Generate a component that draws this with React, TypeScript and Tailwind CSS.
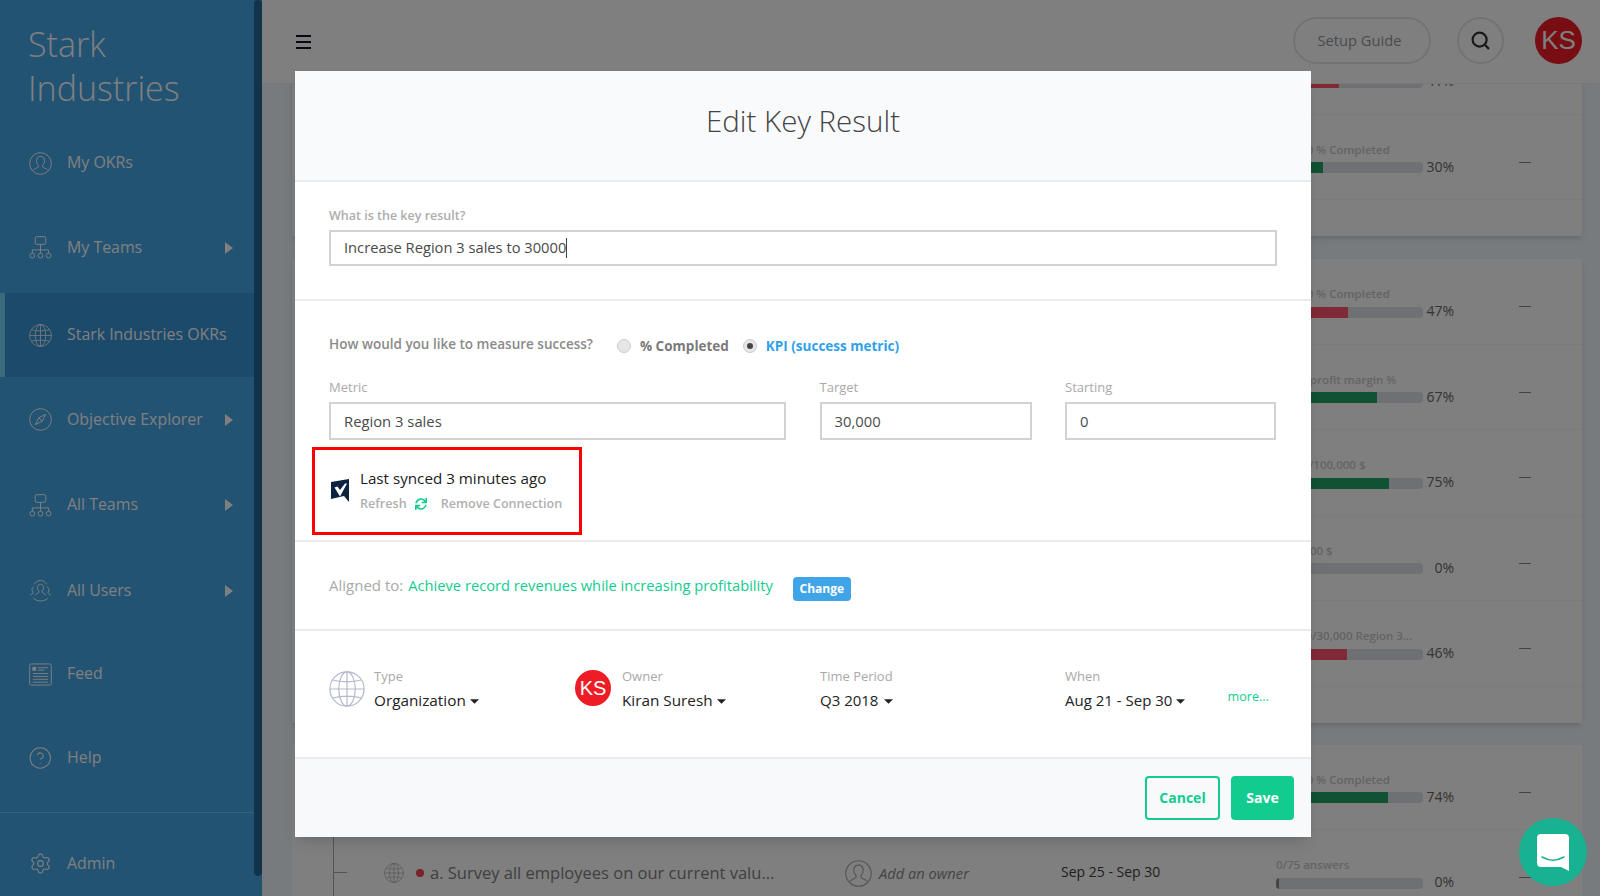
import { CircleHelp, Search, Settings } from 'lucide-react'
import { FaSync } from 'react-icons/fa'

const font = { fontFamily: '"Open Sans", sans-serif' }

function UserIcon({ className }: { className?: string }) {
  return (
    <svg viewBox="0 0 24 24" fill="none" stroke="currentColor" strokeWidth="1" className={className}>
      <circle cx="12" cy="12" r="11.3" />
      <path d="M12 4.5c-2.7 0-4.2 2.1-4.2 4.7 0 2 .9 3.6 2 4.6v1.6c0 1-3.600 1.500-5.300 3.500M12 4.500c2.700 0 4.200 2.100 4.200 4.700 0 2-.9 3.600-2 4.600v1.600c0 1 3.600 1.500 5.300 3.500" />
    </svg>
  )
}

function OrgIcon({ className }: { className?: string }) {
  return (
    <svg viewBox="0 0 24 24" fill="none" stroke="currentColor" strokeWidth="1" className={className}>
      <rect x="6.500" y="0.700" width="11" height="8" rx="1.500" />
      <path d="M12 8.700v9M3.500 18v-3.500h17V18" />
      <circle cx="3.500" cy="20.500" r="2.500" />
      <circle cx="12" cy="20.500" r="2.500" />
      <circle cx="20.500" cy="20.500" r="2.500" />
    </svg>
  )
}

function GlobeIcon({ className }: { className?: string }) {
  return (
    <svg viewBox="0 0 24 24" fill="none" stroke="currentColor" strokeWidth="0.8" className={className}>
      <circle cx="12" cy="12" r="11.400" />
      <ellipse cx="12" cy="12" rx="5.500" ry="11.400" />
      <path d="M12 .6v22.800M.6 12h22.800M2.500 6c5.500 1.600 13.500 1.600 19 0M2.500 18c5.500-1.600 13.500-1.600 19 0" />
    </svg>
  )
}

function CompassIcon({ className }: { className?: string }) {
  return (
    <svg viewBox="0 0 24 24" fill="none" stroke="currentColor" strokeWidth="1" className={className}>
      <circle cx="12" cy="12" r="11.300" />
      <path d="M17.500 6.500 13.800 13.800 6.500 17.500 10.200 10.200Z" />
      <path d="M10.200 10.200 13.800 13.800" />
    </svg>
  )
}

function UsersIcon({ className }: { className?: string }) {
  return (
    <svg viewBox="0 0 24 24" fill="none" stroke="currentColor" strokeWidth="1" className={className}>
      <path d="M12 5.500c-2 0-3.200 1.600-3.200 3.500 0 1.500.7 2.700 1.500 3.500v1.300c0 1-2.800 1.300-3.800 3M12 5.500c2 0 3.200 1.600 3.200 3.500 0 1.500-.7 2.700-1.500 3.500v1.300c0 1 2.800 1.300 3.800 3" />
      <path d="M5.500 8.500c-1.500 0-2.400 1.200-2.400 2.600 0 1.100.5 2 1.100 2.600v1c0 .7-2 1-3 2.300M18.500 8.500c1.500 0 2.400 1.200 2.400 2.600 0 1.100-.5 2-1.100 2.600v1c0 .7 2 1 3 2.300" />
      <path d="M5.500 5.500C7 2.800 9.300 1.500 12 1.500s5 1.300 6.500 4M4.500 20c1.800 1.800 4.500 3 7.500 3s5.700-1.200 7.500-3" />
    </svg>
  )
}

function FeedIcon({ className }: { className?: string }) {
  return (
    <svg viewBox="0 0 24 24" fill="none" stroke="currentColor" strokeWidth="1" className={className}>
      <rect x="0.700" y="1" width="22.600" height="22" rx="1.500" />
      <rect x="4" y="4.500" width="3" height="3" fill="currentColor" />
      <path d="M9 5h11M9 7.500h7M4 11h16M4 14h16M4 17h16M4 20h16" />
    </svg>
  )
}

function Caret() {
  return (
    <svg viewBox="0 0 8 4" className="inline-block h-[5px] w-[9px] fill-[#222] align-middle">
      <path d="M0 0h8L4 4z" />
    </svg>
  )
}

const nav = [
  { label: 'My OKRs', icon: <UserIcon className="h-[23px] w-[23px]" /> },
  { label: 'My Teams', icon: <OrgIcon className="h-[23px] w-[23px]" />, arrow: true, tweak: '-translate-y-[1px]' },
  { label: 'Stark Industries OKRs', icon: <GlobeIcon className="h-[23px] w-[23px]" />, active: true },
  { label: 'Objective Explorer', icon: <CompassIcon className="h-[23px] w-[23px]" />, arrow: true },
  { label: 'All Teams', icon: <OrgIcon className="h-[23px] w-[23px]" />, arrow: true },
  { label: 'All Users', icon: <UsersIcon className="h-[23px] w-[23px]" />, arrow: true },
  { label: 'Feed', icon: <FeedIcon className="h-[23px] w-[23px]" />, tweak: '-mt-[2px]' },
  { label: 'Help', icon: <CircleHelp strokeWidth={1} className="-ml-[1.500px] h-[26px] w-[26px]" />, tweak: '-mt-[2px]' },
]

const card1 = [
  { label: '40/100 % Completed', pct: 41, color: 'bg-[#ff546c]' },
  { label: '30/100 % Completed', pct: 30, color: 'bg-[#22a464]' },
]
const card2 = [
  { label: '47/100 % Completed', pct: 47, color: 'bg-[#ff546c]' },
  { label: '10/15 profit margin %', pct: 67, color: 'bg-[#22a464]' },
  { label: '75000/100,000 $', pct: 75, color: 'bg-[#22a464]' },
  { label: '0/75,000 $', pct: 0, color: 'bg-[#22a464]' },
  { label: '13,800/30,000 Region 3...', pct: 46, color: 'bg-[#ff546c]' },
]

function Progress({ label, pct, color }: { label: string; pct: number; color: string }) {
  return (
    <div className="w-[178px] pt-[27px]">
      <div className="-translate-y-[0.500px] text-[11.500px] leading-4 font-semibold whitespace-nowrap text-[#c8c8c8]">{label}</div>
      <div className="flex h-5 items-center">
        <div className="h-[11px] w-[147px] overflow-hidden rounded-sm bg-[#dfe0e6]">
          <div className={`h-full ${pct === 0 ? 'bg-[#888]' : color}`} style={{ width: `calc(${pct}% + 3px)` }} />
        </div>
        <div className="flex-1 -translate-y-[1px] text-right text-sm text-[#666]">{pct}%</div>
      </div>
    </div>
  )
}

function Row({ item, left, last }: { item: { label: string; pct: number; color: string }; left?: React.ReactNode; last?: boolean }) {
  return (
    <div className={`grid h-[85.5px] grid-cols-[984px_243px_1fr] ${last ? '' : 'border-b border-[#f6f6f6]'}`}>
      <div className="flex">{left}</div>
      <Progress {...item} />
      <div className="pt-[47px]">
        <div className="h-px w-3 bg-[#888]" />
      </div>
    </div>
  )
}

function Field({ label, value, className }: { label: string; value: string; className: string }) {
  return (
    <div className={className}>
      <div className="mb-[7px] text-[13px] leading-4 text-[#a9a9a9]">{label}</div>
      <div className="flex h-[38px] items-center border-2 border-[#d2d2d2] px-[13px] text-[14.800px] text-[#4a4a4a]">{value}</div>
    </div>
  )
}

export default function App() {
  return (
    <div style={font} className="relative flex h-[896px] w-[1600px] overflow-hidden bg-[#eef6fb]">
      {/* Sidebar */}
      <aside className="relative flex h-full w-[262px] shrink-0 flex-col bg-[#44a6e6] text-white">
        <h1 className="h-[122px] pl-[28px] pt-[22px] text-[34px] leading-[44px] font-light">Stark<br />Industries</h1>
        <nav className="flex flex-col gap-[1.500px]">
          {nav.map((item) => (
            <div
              key={item.label}
              className={`flex h-[84px] items-center pl-[29px] pr-[29px] ${item.active ? '!pl-6 border-l-[5px] border-[#74d8f8] bg-[#3694d6]' : 'pb-[2px]'} ${item.tweak ?? ''}`}
            >
              <span className="mr-[15px] flex w-[23px] justify-center">{item.icon}</span>
              <span className="flex-1 text-[15.900px]">{item.label}</span>
              {item.arrow && (
                <svg viewBox="0 0 8 12" className="h-3 w-2 fill-white"><path d="M0 0l8 6-8 6z" /></svg>
              )}
            </div>
          ))}
        </nav>
        <div className="absolute inset-x-0 bottom-0 flex h-[84px] items-center border-t border-[#60d0ee] pl-[29px] pt-[18px]">
          <Settings strokeWidth={1.200} className="mr-[15px] h-[25px] w-[23px]" />
          <span className="text-[15.900px]">Admin</span>
        </div>
        <div className="absolute right-0 top-0 h-[876px] w-2 rounded-md bg-[#246894]" />
      </aside>

      <div className="flex h-full min-w-0 flex-1 flex-col">
        {/* Header */}
        <header className="flex h-[84px] shrink-0 items-center border-b border-[#f0f0f0] bg-white pb-[2px] pl-[34px] pr-[18px]">
          <div className="mt-[2px] flex w-[15px] flex-col gap-1">
            <div className="h-[2px] bg-[#101020]" />
            <div className="h-[2px] bg-[#101020]" />
            <div className="h-[2px] bg-[#101020]" />
          </div>
          <button className="ml-auto h-[47px] w-[138px] rounded-full border-2 border-[#e4e4e4] pr-[5px] text-[14.700px] text-[#979797]">Setup Guide</button>
          <button className="ml-[26px] flex h-[47px] w-[47px] items-center justify-center rounded-full border-2 border-[#e4e4e4]">
            <Search strokeWidth={2.500} className="h-[21px] w-[21px] text-[#333]" />
          </button>
          <div className="ml-[31px] flex h-[47px] w-[47px] items-center justify-center rounded-full bg-[#f11d27] text-[26px] text-white" style={{ fontFamily: '"Liberation Sans", sans-serif' }}>KS</div>
        </header>

        {/* Page behind the modal */}
        <main className="min-h-0 flex-1 overflow-hidden pl-[30px] pr-[18px]">
          <div className="-mt-[55px] flex flex-col">
            <section className="bg-white pb-[36px] shadow-md">
              {card1.map((item) => <Row key={item.label} item={item} />)}
            </section>
            <section className="mt-[23px] bg-white pb-[36px] shadow-md">
              {card2.map((item) => <Row key={item.label} item={item} />)}
            </section>
            <section className="mt-[22px] bg-white">
              <Row item={{ label: '74/100 % Completed', pct: 74, color: 'bg-[#22a464]' }} />
              <Row
                last
                item={{ label: '0/75 answers', pct: 0, color: 'bg-[#888]' }}
                left={
                  <>
                    <div className="ml-[41px] h-full w-[14px] border-l border-[#aaaaaa] pt-[42px]">
                      <div className="h-px bg-[#aaaaaa]" />
                    </div>
                    <div className="ml-[37px] flex w-[461px] items-center self-start pt-[33px]">
                      <GlobeIcon className="h-5 w-5 text-[#aaaaaa]" />
                      <span className="ml-3 h-2 w-2 rounded-full bg-[#f04458]" />
                      <span className="ml-[6px] whitespace-nowrap text-[16.500px] leading-5 text-[#808080]">a. Survey all employees on our current valu...</span>
                    </div>
                    <div className="flex w-[216px] items-center self-start pt-[30px]">
                      <UserIcon className="h-[27px] w-[27px] text-[#aaaaaa]" />
                      <span className="ml-[7px] text-[14.700px] italic text-[#8a8a8a]">Add an owner</span>
                    </div>
                    <div className="self-start pt-[32px] text-sm leading-5 text-[#3e3e3e]">Sep 25 - Sep 30</div>
                  </>
                }
              />
            </section>
          </div>
        </main>
      </div>

      {/* Modal overlay */}
      <div className="absolute inset-0 bg-black/50 pl-[295px] pt-[71px]">
        <div className="flex h-[766px] w-[1016px] flex-col bg-white shadow-lg">
          <div className="flex h-[111px] items-center justify-center border-b-2 border-[#e9ebee] bg-[#f9fafc] pb-[8px]">
            <h2 className="text-[29.500px] font-light text-[#444]">Edit Key Result</h2>
          </div>

          <div className="h-[119px] border-b-2 border-[#e9ebee] px-[34px] pt-[26px]">
            <div className="mb-[6px] text-[12.500px] leading-4 font-semibold text-[#adadad]">What is the key result?</div>
            <div className="flex h-9 items-center border-2 border-[#d2d2d2] px-[13px] pb-[1px] text-[14.700px] text-[#4a4a4a]">
              Increase Region 3 sales to 30000
              <span className="h-5 w-px bg-[#444]" />
            </div>
          </div>

          <div className="h-[241px] border-b-2 border-[#e9ebee] px-[34px] pt-[34px]">
            <div className="flex h-5 items-center text-[13.500px] font-semibold">
              <span className="-translate-y-[1px] text-[#8a8a8a]">How would you like to measure success?</span>
              <span className="ml-[24px] h-[14px] w-[14px] translate-y-[1px] rounded-full border border-[#cccccc] bg-[#e6e6e6]" />
              <span className="ml-[9px] translate-y-[1px] font-bold text-[#7a7a7a]">% Completed</span>
              <span className="ml-[14px] flex h-[14px] w-[14px] translate-y-[1px] items-center justify-center rounded-full border border-[#cccccc] bg-[#e6e6e6]">
                <span className="h-[6px] w-[6px] rounded-full bg-[#444]" />
              </span>
              <span className="ml-[9px] translate-y-[1px] font-bold text-[#2fa1ea]">KPI (success metric)</span>
            </div>
            <div className="mt-6 flex gap-[33.500px]">
              <Field label="Metric" value="Region 3 sales" className="w-[457px]" />
              <Field label="Target" value="30,000" className="w-[212px]" />
              <Field label="Starting" value="0" className="w-[211px]" />
            </div>
            <div className="-ml-[17px] mt-[7px] flex h-[88px] w-[270px] border-[3px] border-[#ff0000] pl-[16px] pt-[18px]">
              <svg viewBox="0 0 19 23" className="mt-[11px] h-[23px] w-[19px] shrink-0">
                <path d="M0 3 18 0v23l-5-6-13 3z" fill="#0d2240" />
                <path d="M3.500 8.500l3-1 2.500 3.500 5-6.500h2L9 17.500z" fill="#fff" />
              </svg>
              <div className="ml-[10px]">
                <div className="text-[15.200px] leading-5 text-[#222]">Last synced 3 minutes ago</div>
                <div className="mt-[6px] flex h-5 items-center text-[12.600px] font-semibold text-[#b0b0b0]">
                  Refresh
                  <FaSync className="ml-[8px] h-3 w-3 text-[#12cc8f]" />
                  <span className="ml-[14px]">Remove Connection</span>
                </div>
              </div>
            </div>
          </div>

          <div className="flex h-[89px] items-center border-b-2 border-[#e9ebee] px-[34px] text-[14.700px]">
            <span className="text-[15px] text-[#a9a9a9]">Aligned to:</span>
            <span className="ml-[5px] text-[#12cc8f]">Achieve record revenues while increasing profitability</span>
            <button className="ml-5 mt-[7px] h-6 w-[58px] rounded-sm bg-[#40a4e8] text-xs font-bold text-white">Change</button>
          </div>

          <div className="grid h-[128px] grid-cols-[246px_245px_245px_1fr] border-b-2 border-[#e9ebee] pl-[34px] pr-[42px] pt-[37px]">
            <div className="flex">
              <GlobeIcon className="mt-[3px] h-9 w-9 text-[#b4b9cc]" />
              <div className="ml-[9px]">
                <div className="text-[13px] leading-4 text-[#a9a9a9]">Type</div>
                <div className="mt-[6px] text-[15.300px] leading-5 text-[#222]">Organization <Caret /></div>
              </div>
            </div>
            <div className="flex">
              <div className="mt-[2px] flex h-9 w-9 items-center justify-center rounded-full bg-[#ee1c25] text-xl text-white" style={{ fontFamily: '"Liberation Sans", sans-serif' }}>KS</div>
              <div className="ml-[11px]">
                <div className="text-[13px] leading-4 text-[#a9a9a9]">Owner</div>
                <div className="mt-[6px] text-[15.300px] leading-5 text-[#222]">Kiran Suresh <Caret /></div>
              </div>
            </div>
            <div>
              <div className="text-[13px] leading-4 text-[#a9a9a9]">Time Period</div>
              <div className="mt-[6px] text-[15px] leading-5 text-[#222]">Q3 2018 <span className="ml-[2px]"><Caret /></span></div>
            </div>
            <div className="flex justify-between">
              <div>
                <div className="text-[13px] leading-4 text-[#a9a9a9]">When</div>
                <div className="mt-[6px] text-[15px] leading-5 text-[#222]">Aug 21 - Sep 30 <Caret /></div>
              </div>
              <div className="mt-[21px] text-[12.600px] leading-4 text-[#12cc8f]">more...</div>
            </div>
          </div>

          <div className="flex flex-1 items-center justify-end gap-[11px] bg-[#f8f9fb] pr-[17px]">
            <button className="h-[44px] w-[75px] rounded-sm border-2 border-[#12cc8f] text-sm font-bold text-[#12cc8f]">Cancel</button>
            <button className="h-[44px] w-[63px] rounded-sm bg-[#12cc8f] text-sm font-bold text-white">Save</button>
          </div>
        </div>
      </div>

      {/* Chat launcher */}
      <button className="absolute left-[1519px] top-[818px] flex h-[68px] w-[68px] items-center justify-center rounded-full bg-[#18b191]">
        <svg viewBox="0 0 32 37" className="h-[37px] w-8">
          <path d="M4 0h24a4 4 0 0 1 4 4v33l-8-4H4a4 4 0 0 1-4-4V4a4 4 0 0 1 4-4z" fill="#fff" />
          <path d="M5 23c7 4 15 4 22 0" fill="none" stroke="#18b191" strokeWidth="1.500" strokeLinecap="round" />
        </svg>
      </button>
    </div>
  )
}
